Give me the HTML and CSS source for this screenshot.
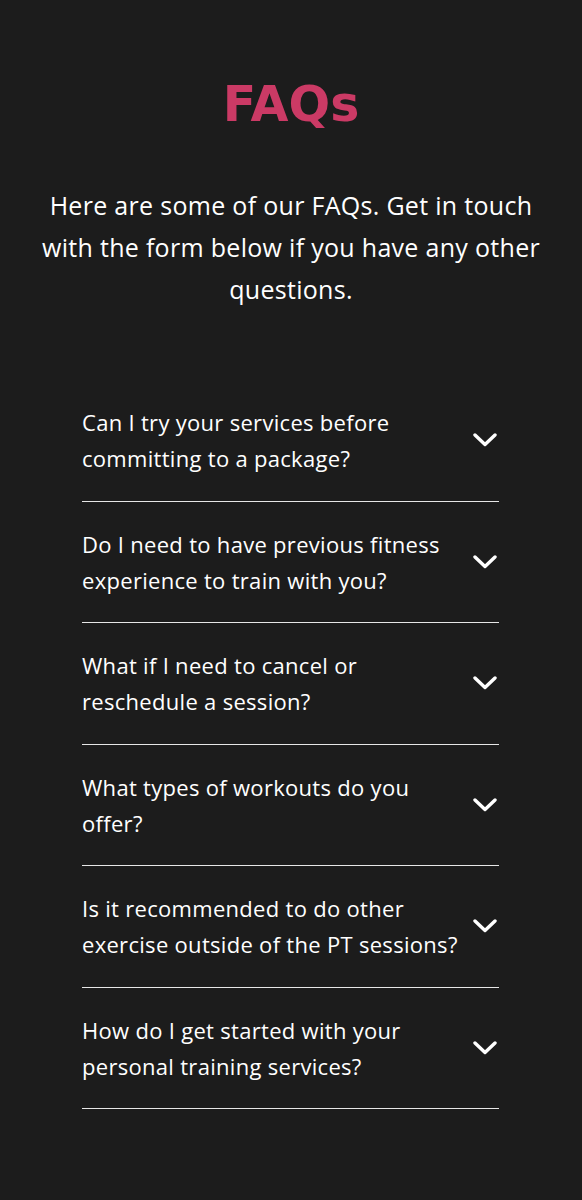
FILE: index.html
```html
<!DOCTYPE html>
<html lang="en">
<head>
<meta charset="utf-8">
<title>FAQs</title>
<link rel="stylesheet" href="styles.css">
</head>
<body>
<section class="faq">
  <h1 class="faq-title">FAQs</h1>
  <p class="faq-intro">Here are some of our FAQs. Get in touch<br>with the form below if you have any other<br>questions.</p>
  <ul class="faq-list">
    <li class="faq-item">
      <span class="faq-q">Can I try your services before<br>committing to a package?</span>
      <svg class="chev" viewBox="0 0 24 14" width="24" height="14"><path d="M2 2 L12 11.5 L22 2"/></svg>
    </li>
    <li class="faq-item">
      <span class="faq-q">Do I need to have previous fitness<br>experience to train with you?</span>
      <svg class="chev" viewBox="0 0 24 14" width="24" height="14"><path d="M2 2 L12 11.5 L22 2"/></svg>
    </li>
    <li class="faq-item">
      <span class="faq-q">What if I need to cancel or<br>reschedule a session?</span>
      <svg class="chev" viewBox="0 0 24 14" width="24" height="14"><path d="M2 2 L12 11.5 L22 2"/></svg>
    </li>
    <li class="faq-item">
      <span class="faq-q">What types of workouts do you<br>offer?</span>
      <svg class="chev" viewBox="0 0 24 14" width="24" height="14"><path d="M2 2 L12 11.5 L22 2"/></svg>
    </li>
    <li class="faq-item">
      <span class="faq-q">Is it recommended to do other<br>exercise outside of the PT sessions?</span>
      <svg class="chev" viewBox="0 0 24 14" width="24" height="14"><path d="M2 2 L12 11.5 L22 2"/></svg>
    </li>
    <li class="faq-item">
      <span class="faq-q">How do I get started with your<br>personal training services?</span>
      <svg class="chev" viewBox="0 0 24 14" width="24" height="14"><path d="M2 2 L12 11.5 L22 2"/></svg>
    </li>
  </ul>
</section>
</body>
</html>
```
FILE: styles.css
```css
html, body {
  margin: 0;
  padding: 0;
  background: #1c1c1c;
}
body {
  font-family: "Open Sans", Roboto, "Liberation Sans", sans-serif;
  color: #ffffff;
  min-height: 1200px;
}
.faq {
  display: flex;
  flex-direction: column;
  align-items: center;
  padding-top: 75px;
}
.faq-title {
  margin: 0;
  font-family: "DejaVu Sans", Roboto, sans-serif;
  font-size: 49px;
  line-height: 60px;
  font-weight: 700;
  color: #cb3a65;
}
.faq-intro {
  margin: 49px 0 0;
  width: 560px;
  text-align: center;
  font-size: 25px;
  letter-spacing: 0.3px;
  line-height: 42px;
  white-space: nowrap;
}
.faq-list {
  list-style: none;
  margin: 70px 1px 0 0;
  padding: 0;
  width: 417px;
}
.faq-item {
  display: flex;
  align-items: center;
  gap: 4px;
  padding: 24px 0 24.5px;
  border-bottom: 1px solid #e6e6e6;
}
.faq-q {
  flex: 1;
  min-width: 0;
  font-size: 22px;
  letter-spacing: 0.3px;
  line-height: 36px;
  white-space: nowrap;
}
.chev {
  flex: none;
  margin-right: 2px;
  fill: none;
  stroke: #ffffff;
  stroke-width: 3.4;
  stroke-linecap: round;
  stroke-linejoin: round;
}
```
